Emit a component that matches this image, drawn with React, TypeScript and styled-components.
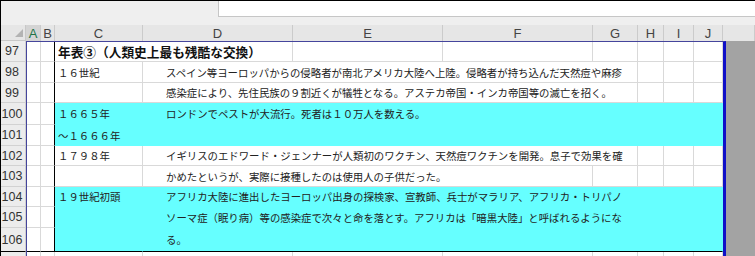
import styled, { createGlobalStyle } from "styled-components";

const GlobalStyle = createGlobalStyle`
  html, body {
    margin: 0;
    padding: 0;
    background: #ffffff;
  }
`;

// column widths: row header, A..J, then the grey area beyond the print range
const COLS = [25, 15, 14, 88, 150, 150, 150, 45, 26, 30, 29, 32];
const LETTERS = ["A", "B", "C", "D", "E", "F", "G", "H", "I", "J"];

interface SheetRow {
  n: number;
  h: number;
  title?: string;
  c?: string;
  d?: string;
  dSpan?: number;
  fill?: boolean;
  last?: boolean;
  hideLabel?: boolean;
}

const ROWS: SheetRow[] = [
  { n: 97, h: 21, title: "年表③（人類史上最も残酷な交換）" },
  {
    n: 98,
    h: 21,
    c: "１６世紀",
    d: "スペイン等ヨーロッパからの侵略者が南北アメリカ大陸へ上陸。侵略者が持ち込んだ天然痘や麻疹",
    dSpan: 4,
  },
  {
    n: 99,
    h: 20,
    d: "感染症により、先住民族の９割近くが犠牲となる。アステカ帝国・インカ帝国等の滅亡を招く。",
    dSpan: 4,
  },
  { n: 100, h: 22, fill: true, c: "１６６５年", d: "ロンドンでペストが大流行。死者は１０万人を数える。" },
  { n: 101, h: 21, fill: true, c: "～１６６６年" },
  {
    n: 102,
    h: 20,
    c: "１７９８年",
    d: "イギリスのエドワード・ジェンナーが人類初のワクチン、天然痘ワクチンを開発。息子で効果を確",
    dSpan: 4,
  },
  { n: 103, h: 21, d: "かめたというが、実際に接種したのは使用人の子供だった。", dSpan: 3 },
  {
    n: 104,
    h: 20,
    fill: true,
    c: "１９世紀初頭",
    d: "アフリカ大陸に進出したヨーロッパ出身の探検家、宣教師、兵士がマラリア、アフリカ・トリパノ",
  },
  {
    n: 105,
    h: 21,
    fill: true,
    d: "ソーマ症（眠り病）等の感染症で次々と命を落とす。アフリカは「暗黒大陸」と呼ばれるようにな",
  },
  { n: 106, h: 24, fill: true, d: "る。", last: true },
  { n: 107, h: 21, hideLabel: true },
];

const Frame = styled.div`
  position: relative;
  width: 755px;
  height: 256px;
  overflow: hidden;
  box-sizing: border-box;
  border-left: 1px solid #000;
  border-top: 1px solid #000;
  background: #fff;
`;

const TopStrip = styled.div`
  display: flex;
  height: 24px;
  background: #efefef;
`;

const NameArea = styled.div`
  flex: 0 0 217px;
`;

const FormulaBox = styled.div`
  flex: 1;
  height: 16px;
  box-sizing: border-box;
  background: #ffffff;
  border-left: 1px solid #c6c6c6;
  border-bottom: 1px solid #c6c6c6;
`;

const Sheet = styled.div`
  display: grid;
  grid-template-columns: ${COLS.map((w) => `${w}px`).join(" ")};
  grid-template-rows: 16px ${ROWS.map((r) => `${r.h}px`).join(" ")};
`;

const Corner = styled.div`
  display: flex;
  justify-content: flex-end;
  align-items: flex-end;
  padding: 0 2px 3px 0;
  background: #e6e6e6;
  border-right: 1px solid #c8c8c8;
  border-bottom: 1px solid #c8c8c8;
  box-sizing: border-box;
`;

const HeaderCell = styled.div<{ $active?: boolean }>`
  display: flex;
  align-items: center;
  justify-content: center;
  box-sizing: border-box;
  background: ${(p) => (p.$active ? "#d4d4d4" : "#e6e6e6")};
  border-right: 1px solid #cbcbcb;
  font-family: "Liberation Sans", Arial, sans-serif;
  font-size: 13px;
  color: ${(p) => (p.$active ? "#217346" : "#444")};
  padding-top: 1px;
`;

const RowHead = styled.div<{ $last?: boolean }>`
  display: flex;
  align-items: center;
  justify-content: center;
  padding-right: 2px;
  box-sizing: border-box;
  background: #ececec;
  border-right: 1px solid #cfcfcf;
  border-bottom: 1px solid ${(p) => (p.$last ? "#000" : "#d2d2d2")};
  font-family: "Liberation Sans", Arial, sans-serif;
  font-size: 12.5px;
  color: #333;
`;

const Cell = styled.div<{
  $span?: number;
  $fill?: boolean;
  $edge?: boolean;
  $last?: boolean;
  $pad?: number;
}>`
  grid-column: span ${(p) => p.$span ?? 1};
  display: flex;
  align-items: center;
  box-sizing: border-box;
  padding-left: ${(p) => p.$pad ?? 3}px;
  background: ${(p) => (p.$fill ? "#66ffff" : "#ffffff")};
  border-right: 1px solid
    ${(p) => (p.$edge ? "#000" : p.$fill ? "transparent" : "#d9d9d9")};
  border-bottom: 1px solid
    ${(p) => (p.$last ? "#000" : p.$fill ? "transparent" : "#d9d9d9")};
  white-space: nowrap;
  font-family: "Noto Sans CJK JP", "Noto Sans", sans-serif;
  font-size: 10.4px;
  color: #222;
`;

const Title = styled.span`
  font-family: "Noto Sans CJK JP", "Noto Sans", sans-serif;
  font-weight: 700;
  font-size: 12.7px;
  color: #111;
`;

const GrayPane = styled.div`
  grid-column: 12;
  grid-row: 2 / -1;
  background: #a3a3a3;
`;

// page-break preview border drawn over the cells
const PrintFrame = styled.div`
  position: absolute;
  left: 25px;
  top: 40px;
  width: 700px;
  height: 260px;
  box-sizing: border-box;
  border-top: 1px solid #45459c;
  border-left: 1px solid #45459c;
  border-right: 3px solid #1010c8;
  pointer-events: none;
`;

function BodyRow({ row }: { row: SheetRow }) {
  const { n, title, c, d, dSpan, fill, last, hideLabel } = row;
  const plain = (count: number, from: number) =>
    Array.from({ length: count }, (_, i) => (
      <Cell key={`p${from + i}`} $last={last} />
    ));

  let rest: React.ReactNode;
  if (title) {
    rest = (
      <>
        <Cell $span={2}>
          <Title>{title}</Title>
        </Cell>
        {plain(6, 0)}
      </>
    );
  } else if (fill) {
    rest = (
      <>
        <Cell $fill $last={last}>
          {c}
        </Cell>
        <Cell $fill $last={last} $span={7} $pad={23}>
          {d}
        </Cell>
      </>
    );
  } else {
    const span = dSpan ?? 1;
    rest = (
      <>
        <Cell $last={last}>{c}</Cell>
        <Cell $last={last} $span={span} $pad={23}>
          {d}
        </Cell>
        {plain(7 - span, span)}
      </>
    );
  }

  return (
    <>
      <RowHead $last={last}>{hideLabel ? null : n}</RowHead>
      <Cell $last={last} />
      <Cell $last={last} $edge={n <= 106} />
      {rest}
    </>
  );
}

export default function App() {
  return (
    <>
      <GlobalStyle />
      <Frame>
        <TopStrip>
          <NameArea />
          <FormulaBox />
        </TopStrip>
        <Sheet>
          <Corner>
            <svg width="8" height="8" viewBox="0 0 8 8">
              <polygon points="8,0 8,8 0,8" fill="#b3b3b3" />
            </svg>
          </Corner>
          {LETTERS.map((l) => (
            <HeaderCell key={l} $active={l === "A"}>
              {l}
            </HeaderCell>
          ))}
          <HeaderCell />
          <GrayPane />
          {ROWS.map((r) => (
            <BodyRow key={r.n} row={r} />
          ))}
        </Sheet>
        <PrintFrame />
      </Frame>
    </>
  );
}
